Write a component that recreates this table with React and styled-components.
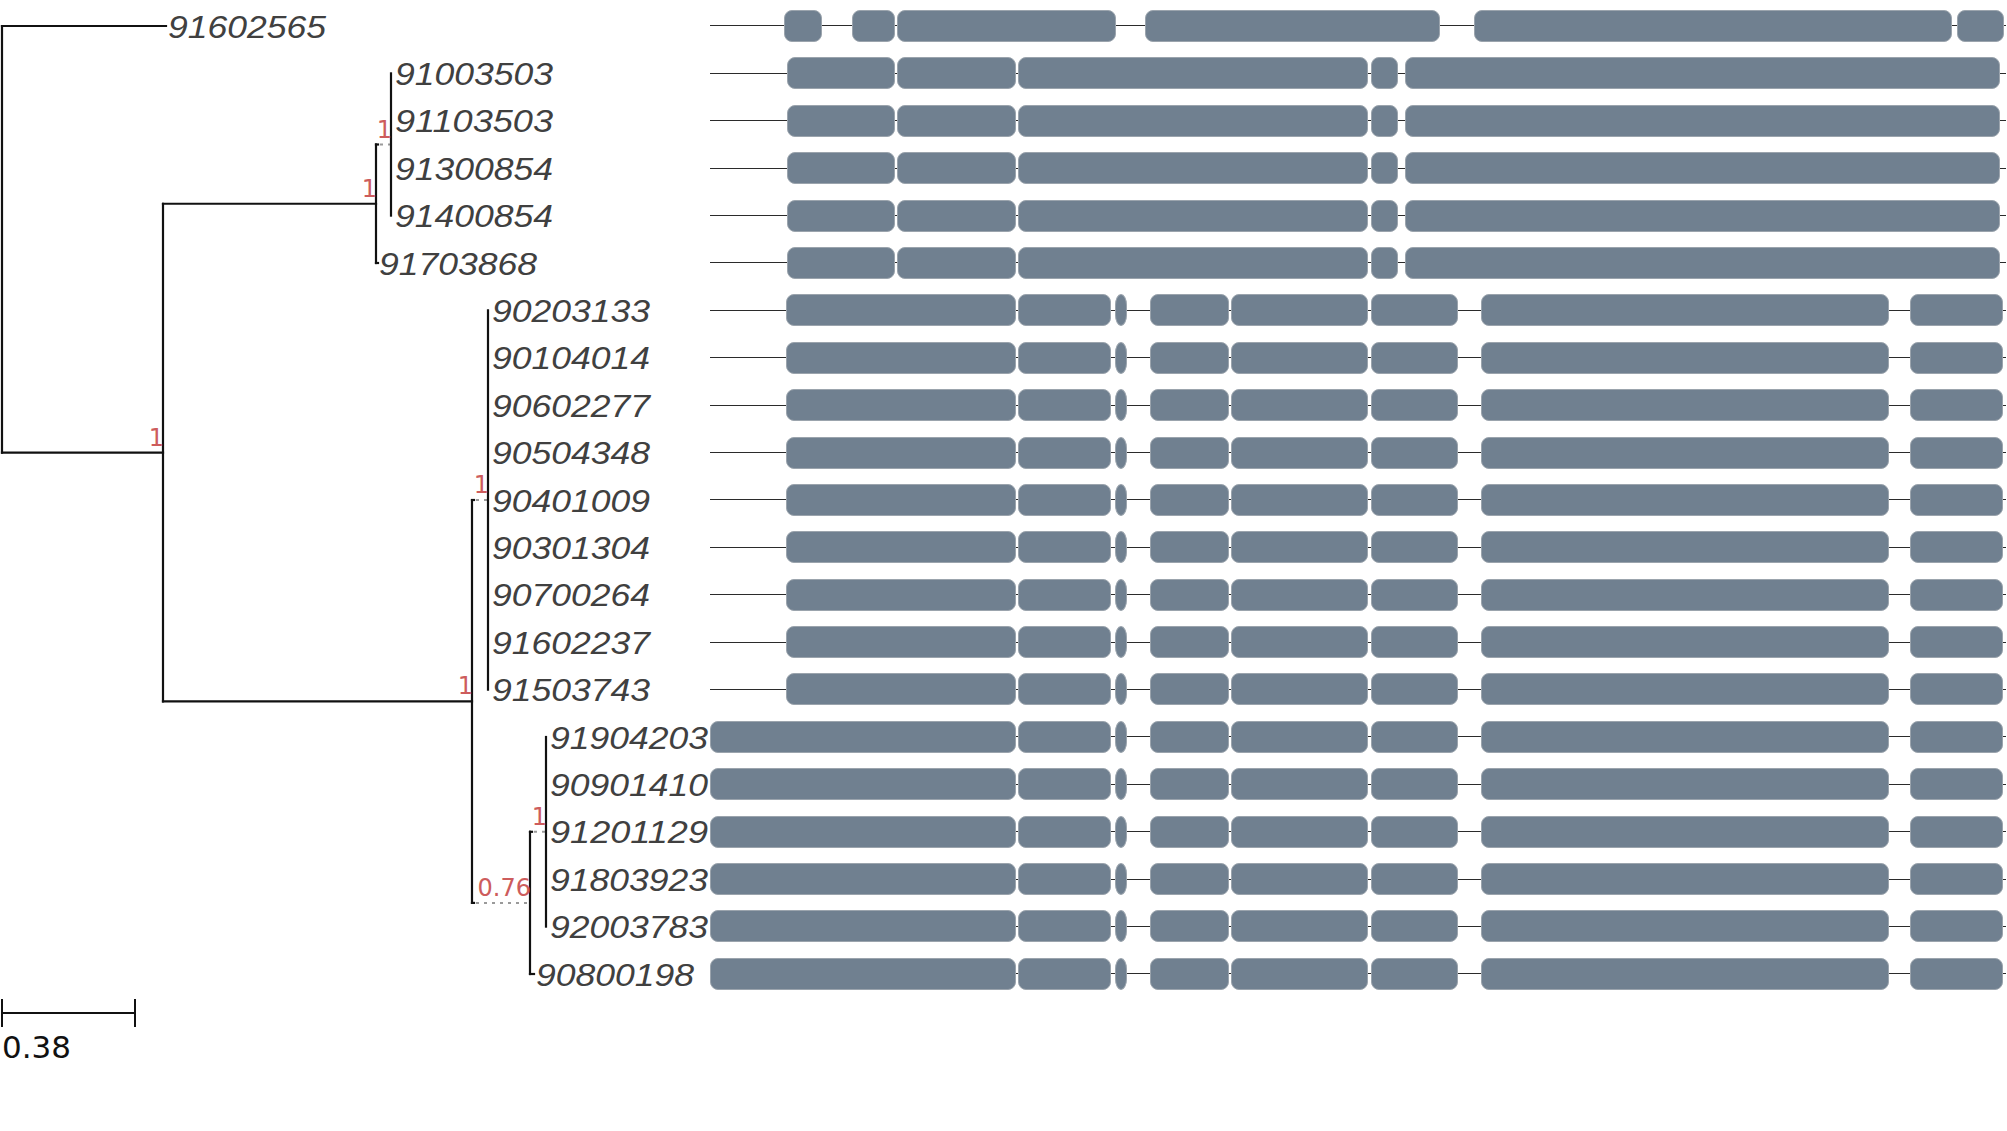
import styled, { createGlobalStyle } from 'styled-components';

const GlobalStyle = createGlobalStyle`
  html, body {
    margin: 0;
    padding: 0;
    background: #ffffff;
    overflow: hidden;
  }
`;

const ROW_H = 47.4;
const FIRST_ROW = 26;
const rowY = (i) => FIRST_ROW + i * ROW_H;

const GENE_START = 710;
const GENE_END = 2006;

// leaf name + x where the label starts
const leaves = [
  ['91602565', 168],
  ['91003503', 395],
  ['91103503', 395],
  ['91300854', 395],
  ['91400854', 395],
  ['91703868', 379],
  ['90203133', 492],
  ['90104014', 492],
  ['90602277', 492],
  ['90504348', 492],
  ['90401009', 492],
  ['90301304', 492],
  ['90700264', 492],
  ['91602237', 492],
  ['91503743', 492],
  ['91904203', 550],
  ['90901410', 550],
  ['91201129', 550],
  ['91803923', 550],
  ['92003783', 550],
  ['90800198', 536],
];

const leafNodes = (from, to, x) =>
  Array.from({ length: to - from + 1 }, (_, k) => ({ leaf: from + k, x }));

const tree = {
  x: 2,
  children: [
    { leaf: 0, x: 166 },
    {
      x: 163,
      support: '1',
      children: [
        {
          x: 376,
          support: '1',
          children: [
            { x: 391, support: '1', dotted: true, children: leafNodes(1, 4, 391) },
            { leaf: 5, x: 378 },
          ],
        },
        {
          x: 472,
          support: '1',
          children: [
            { x: 488, support: '1', dotted: true, children: leafNodes(6, 14, 488) },
            {
              x: 530,
              support: '0.76',
              dotted: true,
              children: [
                { x: 546, support: '1', dotted: true, children: leafNodes(15, 19, 546) },
                { leaf: 20, x: 534 },
              ],
            },
          ],
        },
      ],
    },
  ],
};

const placeY = (node) => {
  if (node.leaf !== undefined) {
    node.y = rowY(node.leaf);
  } else {
    node.children.forEach(placeY);
    const first = node.children[0].y;
    const last = node.children[node.children.length - 1].y;
    node.y = (first + last) / 2;
  }
  return node;
};
placeY(tree);

// exon coordinates in page pixels
const tail = [[1018, 1111], [1115, 1127, true], [1150, 1229], [1231, 1368], [1371, 1458], [1481, 1889], [1910, 2003]];
const geneA = [[784, 822], [852, 895], [897, 1116], [1145, 1440], [1474, 1952], [1957, 2004]];
const geneB = [[787, 895], [897, 1016], [1018, 1368], [1371, 1398], [1405, 2000]];
const geneC = [[786, 1016], ...tail];
const geneD = [[710, 1016], ...tail];

const genes = [
  geneA,
  ...Array(5).fill(geneB),
  ...Array(9).fill(geneC),
  ...Array(6).fill(geneD),
];

const toSegments = (exons) => {
  const segs = [];
  let cursor = GENE_START;
  exons.forEach(([start, end, dot]) => {
    if (start > cursor) segs.push({ kind: 'intron', width: start - cursor });
    segs.push({ kind: 'exon', width: end - start, dot: !!dot });
    cursor = end;
  });
  if (GENE_END > cursor) segs.push({ kind: 'intron', width: GENE_END - cursor });
  return segs;
};

const Figure = styled.div`
  display: grid;
  grid-template-columns: ${GENE_START}px ${2007 - GENE_START}px;
  grid-template-rows: 998px auto;
  width: 2007px;
  height: 1131px;
`;

const TreeSvg = styled.svg`
  display: block;
  overflow: visible;
`;

const Branch = styled.line`
  stroke: #111111;
  stroke-width: 2.2;
  stroke-linecap: square;
`;

const DottedBranch = styled.line`
  stroke: #9a9a9a;
  stroke-width: 2;
  stroke-dasharray: 3 5;
`;

const LeafLabel = styled.text`
  font-family: 'Liberation Sans', Arial, sans-serif;
  font-style: italic;
  font-size: 31px;
  fill: #404040;
`;

const SupportLabel = styled.text`
  font-family: 'DejaVu Sans', sans-serif;
  font-size: 24px;
  fill: #cd5c5c;
`;

const TrackColumn = styled.div`
  display: grid;
  grid-template-rows: repeat(${genes.length}, ${ROW_H}px);
  padding-top: ${FIRST_ROW - ROW_H / 2}px;
  align-content: start;
`;

const Track = styled.div`
  display: flex;
  align-items: center;
`;

const Intron = styled.div`
  flex: none;
  height: 1px;
  background: #2b2b2b;
`;

const Exon = styled.div`
  flex: none;
  box-sizing: border-box;
  height: 32px;
  background: #708090;
  border: 1px solid #9ba4ad;
  border-radius: ${(p) => (p.$dot ? '6px / 11px' : '8px')};
`;

const ScaleBlock = styled.div`
  display: flex;
  flex-direction: column;
  align-items: flex-start;
  padding-left: 1px;
`;

const ScaleBar = styled.div`
  box-sizing: border-box;
  margin-top: 1px;
  width: 135px;
  height: 28px;
  border-left: 2px solid #111111;
  border-right: 2px solid #111111;
  background: linear-gradient(#111111, #111111) center / 100% 2px no-repeat;
`;

const ScaleLabel = styled.div`
  margin-top: 5px;
  padding-left: 1px;
  font-family: 'DejaVu Sans', sans-serif;
  font-size: 31px;
  line-height: 1;
  color: #111111;
`;

const renderNode = (node, parent, out) => {
  if (parent) {
    if (node.dotted) {
      out.push(<Branch key={`hs${node.x}-${node.y}`} x1={parent.x} x2={parent.x + 2} y1={node.y} y2={node.y} />);
      out.push(<DottedBranch key={`hd${node.x}-${node.y}`} x1={parent.x + 4} x2={node.x} y1={node.y} y2={node.y} />);
    } else if (node.x > parent.x) {
      out.push(<Branch key={`h${node.x}-${node.y}`} x1={parent.x} x2={node.x} y1={node.y} y2={node.y} />);
    }
  }
  if (node.children) {
    const first = node.children[0].y;
    const last = node.children[node.children.length - 1].y;
    out.push(<Branch key={`v${node.x}-${node.y}`} x1={node.x} x2={node.x} y1={first} y2={last} />);
    if (node.support) {
      out.push(
        <SupportLabel key={`s${node.x}-${node.y}`} x={node.x + 1} y={node.y - 7} textAnchor="end">
          {node.support}
        </SupportLabel>
      );
    }
    node.children.forEach((child) => renderNode(child, node, out));
  }
  return out;
};

const PhyloTree = () => (
  <TreeSvg width={GENE_START} height={998} viewBox={`0 0 ${GENE_START} 998`}>
    {renderNode(tree, null, [])}
    {leaves.map(([name, x], i) => (
      <LeafLabel key={name + i} x={x} y={rowY(i) + 11.5} textLength={158} lengthAdjust="spacingAndGlyphs">
        {name}
      </LeafLabel>
    ))}
  </TreeSvg>
);

const GeneTracks = () => (
  <TrackColumn>
    {genes.map((exons, i) => (
      <Track key={i}>
        {toSegments(exons).map((seg, k) =>
          seg.kind === 'exon' ? (
            <Exon key={k} $dot={seg.dot} style={{ width: seg.width }} />
          ) : (
            <Intron key={k} style={{ width: seg.width }} />
          )
        )}
      </Track>
    ))}
  </TrackColumn>
);

const App = () => (
  <>
    <GlobalStyle />
    <Figure>
      <PhyloTree />
      <GeneTracks />
      <ScaleBlock>
        <ScaleBar />
        <ScaleLabel>0.38</ScaleLabel>
      </ScaleBlock>
    </Figure>
  </>
);

export default App;
